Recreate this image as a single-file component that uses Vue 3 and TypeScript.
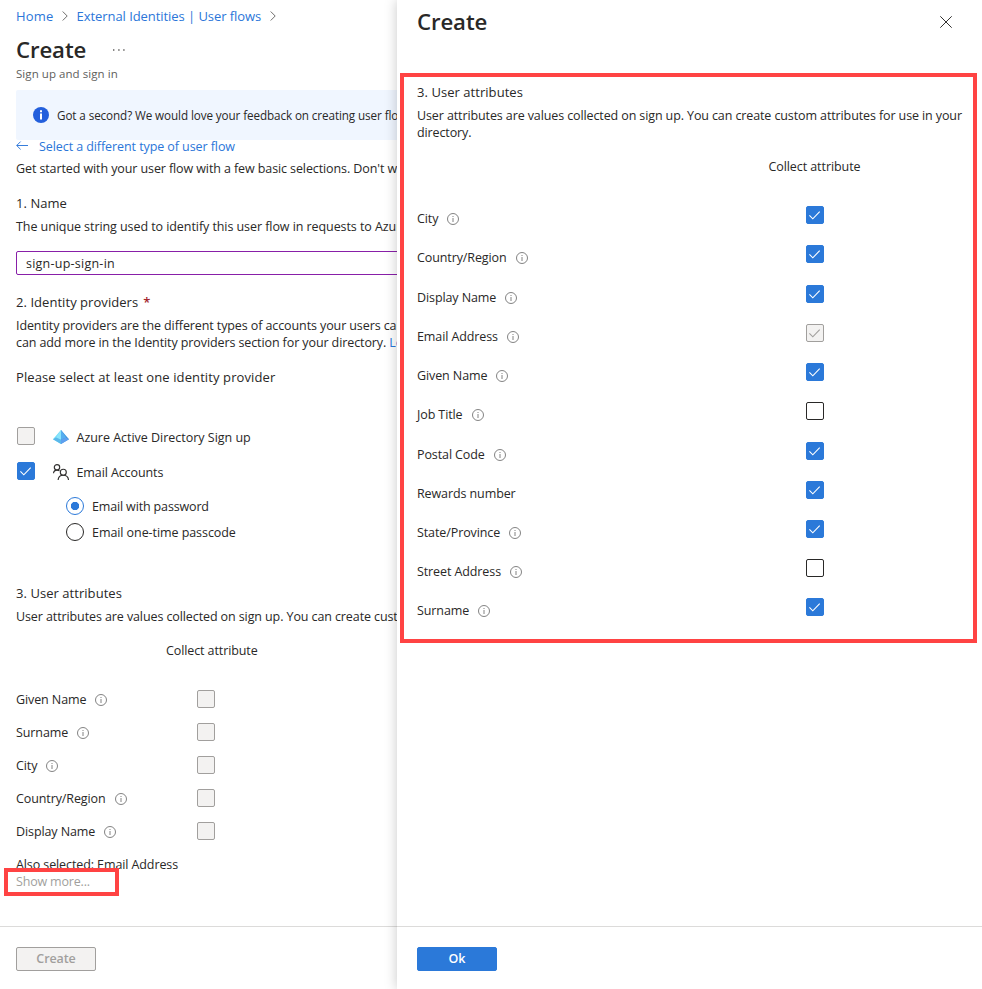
<script setup lang="ts">
import { defineComponent, h } from 'vue'

interface Attribute {
  name: string
  info?: boolean
  state: 'on' | 'off' | 'disabled' | 'locked'
}

const CheckBox = defineComponent({
  props: { state: { type: String, required: true } },
  setup(props) {
    return () =>
      h('span', { class: ['cb', `cb-${props.state}`], role: 'checkbox' },
        props.state === 'on' || props.state === 'locked'
          ? [h('svg', { viewBox: '0 0 18 18', width: 18, height: 18 }, [
              h('path', { d: 'M3.4 9.4 6.8 12.8 13.7 5.7', fill: 'none', stroke: 'currentColor', 'stroke-width': 1.1 }),
            ])]
          : [])
  },
})

const InfoIcon = defineComponent({
  setup() {
    return () =>
      h('svg', { class: 'info-icon', viewBox: '0 0 12 12', width: 12, height: 12 }, [
        h('circle', { cx: 6, cy: 6, r: 5.5, fill: 'none', stroke: '#757575', 'stroke-width': 0.9 }),
        h('path', { d: 'M6 5v4M6 3v1', stroke: '#757575', 'stroke-width': 0.9 }),
      ])
  },
})

const summaryAttributes: Attribute[] = [
  'Given Name', 'Surname', 'City', 'Country/Region', 'Display Name',
].map((name) => ({ name, info: true, state: 'disabled' }))

const attributes: Attribute[] = [
  { name: 'City', info: true, state: 'on' },
  { name: 'Country/Region', info: true, state: 'on' },
  { name: 'Display Name', info: true, state: 'on' },
  { name: 'Email Address', info: true, state: 'locked' },
  { name: 'Given Name', info: true, state: 'on' },
  { name: 'Job Title', info: true, state: 'off' },
  { name: 'Postal Code', info: true, state: 'on' },
  { name: 'Rewards number', state: 'on' },
  { name: 'State/Province', info: true, state: 'on' },
  { name: 'Street Address', info: true, state: 'off' },
  { name: 'Surname', info: true, state: 'on' },
]
</script>

<template>
  <div class="page">
    <main class="blade">
      <div class="blade-body">
        <nav class="crumbs">
          <a class="home">Home</a>
          <svg width="6" height="10" viewBox="0 0 6 10"><path d="M.7.5 5.2 5 .7 9.5" fill="none" stroke="#605e5c" stroke-width=".9" /></svg>
          <a>External Identities | User flows</a>
          <svg width="6" height="10" viewBox="0 0 6 10"><path d="M.7.5 5.2 5 .7 9.5" fill="none" stroke="#605e5c" stroke-width=".9" /></svg>
        </nav>
        <div class="title-row">
          <h1>Create</h1>
          <svg width="12" height="2" viewBox="0 0 12 2" fill="#605e5c"><path d="M0 .3h1.4v1.4H0zM5.2.3h1.4v1.4H5.2zM10.2.3h1.4v1.4h-1.4z" /></svg>
        </div>
        <p class="subtitle">Sign up and sign in</p>

        <div class="banner">
          <svg width="16" height="16" viewBox="0 0 16 16"><circle cx="8" cy="8" r="8" fill="#235fdc" /><path d="M8 6.6v6M8 3.2v2" stroke="#fff" stroke-width="2" /></svg>
          <span>Got a second? We would love your feedback on creating user flows</span>
        </div>
        <a class="back">
          <svg width="12" height="9" viewBox="0 0 12 9"><path d="M12 4.5H.8M4.6.6.7 4.5l3.9 3.9" fill="none" stroke="#2b76d9" stroke-width=".95" /></svg>
          <span>Select a different type of user flow</span>
        </a>
        <p class="intro">Get started with your user flow with a few basic selections. Don't worry</p>

        <h2 class="h-name">1. Name</h2>
        <p class="after-heading unique">The unique string used to identify this user flow in requests to Azure</p>
        <div class="input">sign-up-sign-in</div>

        <h2 class="h-idp">2. Identity providers <b class="req">*</b></h2>
        <p class="two-line">Identity providers are the different types of accounts your users can<br />can add more in the Identity providers section for your directory. <a>Learn</a></p>
        <p class="please">Please select at least one identity provider</p>

        <div class="provider aad">
          <CheckBox state="disabled" />
          <svg class="p-icon" width="16" height="14" viewBox="0 0 16 14">
            <path d="M8 0 0 9.2 8 14z" fill="#6ddcf8" /><path d="M8 0l8 9.2L8 14z" fill="#3a91d8" />
            <path d="M8 0v9.8l-5-2.3z" fill="#8be4fb" /><path d="M8 0v9.8l5.2-2.3z" fill="#54aef0" />
            <path d="M0 9.2 3.2 7.6 8 9.8V14z" fill="#5bb8ea" /><path d="M16 9.2 12.8 7.6 8 9.8V14z" fill="#5ea0ef" />
          </svg>
          <span>Azure Active Directory Sign up</span>
        </div>
        <div class="provider email">
          <CheckBox state="on" />
          <svg class="p-icon people" width="16" height="16" viewBox="0 0 16 16" fill="none" stroke="#323130" stroke-width="1.15">
            <circle cx="4" cy="3.3" r="2.7" /><circle cx="10.3" cy="8.2" r="3" />
            <path d="M.5 9.2C.7 7.3 2 6.1 4 6.1c1 0 1.8.3 2.5.8M5.1 16c.2-2.9 2.4-4.8 5.2-4.8s5 1.9 5.2 4.8" />
          </svg>
          <span>Email Accounts</span>
        </div>
        <div class="radio first"><i class="dot on"></i><span>Email with password</span></div>
        <div class="radio second"><i class="dot"></i><span>Email one-time passcode</span></div>

        <h2 class="h-attr">3. User attributes</h2>
        <p class="after-heading">User attributes are values collected on sign up. You can create custom</p>
        <div class="collect">Collect attribute</div>
        <div class="summary">
          <div v-for="a in summaryAttributes" :key="a.name" class="summary-row">
            <div class="label"><span>{{ a.name }}</span><InfoIcon /></div>
            <CheckBox :state="a.state" />
          </div>
        </div>
        <p class="also">Also selected: Email Address</p>
        <div class="more"><span>Show more...</span><div class="more-mark"></div></div>
      </div>
      <footer class="footer"><button class="btn btn-disabled">Create</button></footer>
    </main>

    <aside class="panel">
      <header class="panel-head">
        <h1>Create</h1>
        <svg width="12" height="12" viewBox="0 0 12 12"><path d="M.3.3l11.4 11.4M11.7.3.3 11.7" stroke="#323130" stroke-width="1" /></svg>
      </header>
      <section class="panel-box">
        <h2>3. User attributes</h2>
        <p class="panel-text">User attributes are values collected on sign up. You can create custom attributes for use in your<br />directory.</p>
        <div class="panel-collect">Collect attribute</div>
        <div class="attr-list">
          <div v-for="a in attributes" :key="a.name" class="attr-row">
            <div class="label"><span>{{ a.name }}</span><InfoIcon v-if="a.info" /></div>
            <CheckBox :state="a.state" />
          </div>
        </div>
      </section>
      <footer class="footer panel-footer"><button class="btn btn-primary">Ok</button></footer>
    </aside>
  </div>
</template>

<style>
body { margin: 0; background: #fff; }
.cb { display: block; flex: none; box-sizing: border-box; width: 18px; height: 18px; border-radius: 2px; border: 1px solid #292827; }
.cb svg { display: block; margin: -1px; }
.cb-on { background: #2b79d9; border-color: #2b79d9; color: #fff; }
.cb-disabled, .cb-locked { background: #f3f2f1; border-color: #a19f9d; color: #a19f9d; }
.info-icon { display: block; flex: none; }
</style>

<style scoped>
.page { display: grid; grid-template-columns: 397px 585px; width: 982px; height: 989px; overflow: hidden; background: #fff; font: 12.5px/18px "Open Sans", "Noto Sans", sans-serif; letter-spacing: -0.1px; color: #292827; }
h1, h2, p { margin: 0; font-weight: 400; font-size: inherit; }
h1 { font-size: 22.2px; line-height: 30px; font-weight: 600; letter-spacing: -0.1px; }
h2, .please { padding-bottom: 2px; font-size: 13px; line-height: 16px; letter-spacing: 0.05px; }
.please { letter-spacing: 0.1px; }
a { color: #2b76d9; }

.blade { display: flex; flex-direction: column; min-width: 0; overflow: hidden; white-space: nowrap; }
.blade-body { flex: 1; min-height: 0; padding: 8px 0 0 16px; }
.crumbs { display: flex; align-items: center; gap: 8.5px; height: 16px; margin-bottom: 11px; font-size: 13px; line-height: 16px; letter-spacing: -0.06px; }
.home { letter-spacing: 0.2px; }
.title-row { display: flex; align-items: center; gap: 27px; }
.subtitle { margin-top: 1px; font-size: 11.5px; line-height: 16px; letter-spacing: 0.06px; color: #605e5c; }
.banner { display: flex; align-items: center; gap: 8px; height: 50px; margin-top: 8px; padding-left: 17px; background: #f0f6ff; border-radius: 2px 0 0 2px; font-size: 11.7px; }
.banner svg { flex: none; }
.back { display: flex; align-items: center; gap: 11px; margin-top: -2px; letter-spacing: -0.08px; }
.back svg { margin-top: -3px; }
.intro { margin-top: 4px; }
.h-name { margin-top: 17px; }
.after-heading { margin-top: 5px; }
.unique { letter-spacing: -0.07px; }
.input { box-sizing: border-box; height: 24px; width: 420px; margin-top: 15px; padding: 3px 9px 0; border: 1px solid #881fa8; border-radius: 2px; letter-spacing: 0.24px; }
.h-idp { margin-top: 19px; }
.req { margin-left: 1.5px; color: #a4262c; font-weight: 600; }
.two-line { margin-top: 5px; line-height: 17px; }
.please { margin-top: 18px; }
.provider { display: flex; height: 18px; padding-left: 1px; letter-spacing: -0.02px; }
.provider > span:last-child { padding-top: 2px; }
.p-icon { flex: none; margin: 3px 7.5px 0 18px; }
.people { margin-top: 2px; }
.aad { margin-top: 40px; }
.email { margin-top: 17px; letter-spacing: -0.1px; }
.radio { display: flex; gap: 8px; padding-left: 50px; }
.radio span { padding-top: 1px; margin-bottom: -1px; }
.first { margin-top: 17px; letter-spacing: -0.15px; }
.second { margin-top: 8px; letter-spacing: -0.07px; }
.dot { box-sizing: border-box; width: 18px; height: 18px; border: 1px solid #292827; border-radius: 50%; }
.dot.on { border-color: #2b79d9; background: radial-gradient(circle, #2b79d9 3.8px, transparent 4.5px); }
.h-attr { margin-top: 44px; }
.collect { margin-top: 16px; padding-left: 150px; }
.summary { display: grid; gap: 15px; margin-top: 30px; }
.summary-row { display: grid; grid-template-columns: 181px 18px; height: 18px; }
.label { display: flex; align-items: flex-start; gap: 9px; }
.label span { padding-top: 1px; }
.label svg { margin-top: 4px; }
.also { margin-top: 16px; }
.more { position: relative; margin-top: -1px; color: #a19f9d; letter-spacing: -0.18px; }
.more-mark { position: absolute; left: -12px; top: -5px; width: 107px; height: 20px; border: 4px solid #ff4343; }

.footer { box-sizing: border-box; height: 63px; padding: 20px 16px 0; border-top: 1px solid #dcdbda; }
.btn { box-sizing: border-box; display: block; width: 80px; height: 24px; padding: 0; border: 1px solid; border-radius: 2px; font: 600 12.5px/20px "Open Sans", "Noto Sans", sans-serif; letter-spacing: -0.1px; }
.btn-disabled { color: #a19f9d; background: #f3f2f1; border-color: #a19f9d; }
.btn-primary { color: #fff; background: #2b79d9; border-color: #2b79d9; }

.panel { display: flex; flex-direction: column; position: relative; min-width: 0; background: #fff; box-shadow: 0 0 12px rgba(0, 0, 0, 0.22); }
.panel-head { display: flex; align-items: center; justify-content: space-between; height: 29px; padding: 7px 30px 0 20px; }
.panel-box { box-sizing: border-box; width: 577px; height: 570px; margin: 37px 0 0 3px; padding: 7px 8px 0 13px; border: 4px solid #ff4343; white-space: nowrap; }
.panel-text { margin-top: 5px; line-height: 17px; letter-spacing: -0.11px; }
.panel-collect { margin-top: 17px; padding-left: 351.4px; letter-spacing: -0.07px; }
.attr-list { display: grid; grid-auto-rows: 39.22px; margin-top: 30.25px; }
.attr-row { display: grid; grid-template-columns: 389px 18px; align-items: start; }
.attr-row .label { padding-top: 3px; }
.panel-footer { margin-top: auto; padding-left: 20px; }
</style>
